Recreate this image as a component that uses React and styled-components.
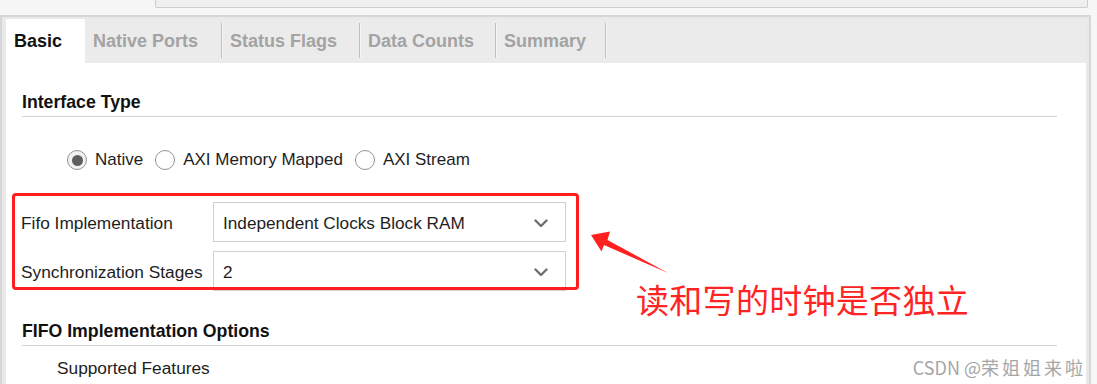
import React from "react";
import styled, { createGlobalStyle } from "styled-components";

const GlobalStyle = createGlobalStyle`
  body {
    margin: 0;
    background: #f6f6f6;
    font-family: "Liberation Sans", Arial, sans-serif;
  }
`;

const tabs = [
  { label: "Basic", width: 79, active: true },
  { label: "Native Ports", width: 137 },
  { label: "Status Flags", width: 138 },
  { label: "Data Counts", width: 136 },
  { label: "Summary", width: 110 },
];

const Chevron = () => (
  <svg width="14" height="9" viewBox="0 0 14 9">
    <polyline
      points="1.5,1.5 7,7 12.5,1.5"
      fill="none"
      stroke="#6f6f6f"
      strokeWidth="2.4"
      strokeLinecap="round"
      strokeLinejoin="round"
    />
  </svg>
);

const Radio = ({ checked, children }) => (
  <RadioItem>
    <RadioCircle checked={checked} />
    <span>{children}</span>
  </RadioItem>
);

const Select = ({ value }) => (
  <SelectBox>
    <span>{value}</span>
    <Chevron />
  </SelectBox>
);

const App = () => {
  return (
    <Page>
      <GlobalStyle />
      <TopStrip>
        <FieldEdge />
      </TopStrip>
      <Panel>
        <TabBar>
          {tabs.map((t) => (
            <Tab key={t.label} active={t.active} w={t.width}>
              {t.label}
            </Tab>
          ))}
        </TabBar>
        <Content>
          <SectionTitle>Interface Type</SectionTitle>
          <RadioRow>
            <Radio checked>Native</Radio>
            <Radio>AXI Memory Mapped</Radio>
            <Radio>AXI Stream</Radio>
          </RadioRow>
          <FormArea>
            <FieldLabel>Fifo Implementation</FieldLabel>
            <Select value="Independent Clocks Block RAM" />
            <FieldLabel>Synchronization Stages</FieldLabel>
            <Select value="2" />
          </FormArea>
          <SectionTitle second>FIFO Implementation Options</SectionTitle>
          <SubLabel>Supported Features</SubLabel>
        </Content>
      </Panel>

      <ArrowMark width="90" height="50" viewBox="585 228 90 50">
        <polygon
          points="591,235 610,231.5 607.5,240 668,273 604,245 601.5,251.5"
          fill="#ff2020"
        />
      </ArrowMark>
      <Note>读和写的时钟是否独立</Note>
      <Watermark>
        CSDN @<WatermarkName>荣姐姐来啦</WatermarkName>
      </Watermark>
    </Page>
  );
};

export default App;

const Page = styled.div`
  position: relative;
  width: 1097px;
  height: 384px;
  overflow: hidden;
  background: #f6f6f6;
  display: flex;
  flex-direction: column;
`;

const TopStrip = styled.div`
  height: 15px;
  flex-shrink: 0;
  padding: 0 9px 0 155px;
  box-sizing: border-box;
`;

const FieldEdge = styled.div`
  height: 8px;
  box-sizing: border-box;
  background: #efefef;
  border: 1px solid #cdcdcd;
  border-top: none;
  border-radius: 0 0 2px 2px;
`;

const Panel = styled.div`
  flex: 1;
  display: flex;
  flex-direction: column;
  margin-right: 6px;
  padding: 2px 3px 0 4px;
  background: #e9e9e9;
  border: 2px solid #d6d6d6;
  border-bottom: none;
`;

const TabBar = styled.div`
  display: flex;
  height: 44px;
  flex-shrink: 0;
  background: #ebebeb;
`;

const Tab = styled.div`
  position: relative;
  width: ${(p) => p.w}px;
  box-sizing: border-box;
  padding-left: 8px;
  display: flex;
  align-items: center;
  font-size: 18px;
  font-weight: bold;
  color: ${(p) => (p.active ? "#111" : "#a3a3a3")};
  background: ${(p) => (p.active ? "#fff" : "transparent")};

  &::after {
    content: "";
    display: ${(p) => (p.active ? "none" : "block")};
    position: absolute;
    right: 0;
    top: 4px;
    bottom: 5px;
    width: 1px;
    background: #bfbfbf;
    box-shadow: 1px 0 0 #f5f5f5;
  }
`;

const Content = styled.div`
  flex: 1;
  background: #fff;
  padding: 0 29px 0 16px;
`;

const SectionTitle = styled.div`
  margin-top: ${(p) => (p.second ? 30 : 29)}px;
  font-size: 17.7px;
  font-weight: bold;
  line-height: 20px;
  color: #111;
  padding-bottom: 4px;
  border-bottom: 1px solid #d3d3d3;
`;

const RadioRow = styled.div`
  display: flex;
  align-items: center;
  gap: 12px;
  height: 24px;
  margin-top: 31px;
  padding-left: 45px;
  font-size: 17px;
  color: #1e1e1e;
`;

const RadioItem = styled.label`
  display: flex;
  align-items: center;
  gap: 8px;
`;

const RadioCircle = styled.span`
  width: 20px;
  height: 20px;
  box-sizing: border-box;
  border-radius: 50%;
  border: 1px solid #959595;
  background: ${(p) => (p.checked ? "#f2f2f2" : "#fff")};
  display: flex;
  align-items: center;
  justify-content: center;

  &::before {
    content: "";
    display: ${(p) => (p.checked ? "block" : "none")};
    width: 11px;
    height: 11px;
    border-radius: 50%;
    background: #5f5f5f;
  }
`;

const FormArea = styled.div`
  position: relative;
  display: grid;
  grid-template-columns: 191px 353px;
  grid-auto-rows: 40px;
  row-gap: 9px;
  align-items: center;
  width: 544px;
  margin-top: 30px;

  &::after {
    content: "";
    position: absolute;
    left: -10px;
    right: -13px;
    top: -9px;
    bottom: 1px;
    border: 3px solid #ff1e1e;
    border-radius: 4px;
    pointer-events: none;
  }
`;

const FieldLabel = styled.div`
  font-size: 17.3px;
  color: #1e1e1e;
  margin-left: -1px;
  padding-top: 2px;
`;

const SelectBox = styled.div`
  height: 40px;
  box-sizing: border-box;
  border: 1px solid #d0d0d0;
  background: #fff;
  display: flex;
  align-items: center;
  justify-content: space-between;
  padding: 2px 17px 0 9px;
  font-size: 17.2px;
  color: #1e1e1e;
`;

const SubLabel = styled.div`
  margin-top: 12px;
  padding-left: 35px;
  line-height: 20px;
  font-size: 17.3px;
  color: #1e1e1e;
`;

const ArrowMark = styled.svg`
  position: absolute;
  left: 585px;
  top: 228px;
`;

const Note = styled.div`
  position: absolute;
  left: 636px;
  top: 283px;
  font-family: "Noto Sans CJK SC", sans-serif;
  font-size: 33px;
  letter-spacing: 0.3px;
  line-height: 1;
  color: #ff2424;
  white-space: nowrap;
`;

const Watermark = styled.div`
  position: absolute;
  right: 11px;
  top: 358px;
  font-family: "Noto Sans CJK SC", sans-serif;
  font-size: 18px;
  line-height: 1;
  color: #a6a6a6;
  white-space: nowrap;
`;

const WatermarkName = styled.span`
  letter-spacing: 3px;
`;
